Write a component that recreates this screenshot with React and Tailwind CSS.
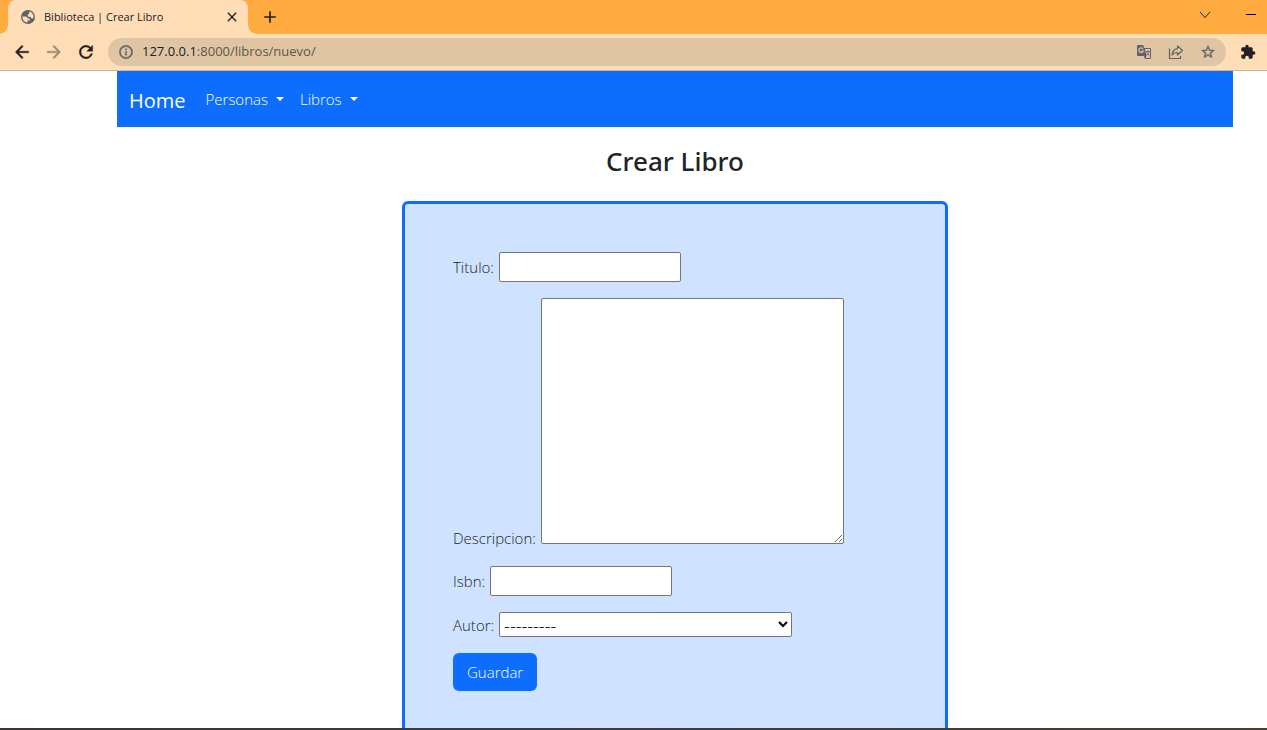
import React from 'react';
import { MdArrowBack, MdArrowForward, MdRefresh, MdInfoOutline, MdStarBorder, MdExtension, MdClose, MdAdd } from 'react-icons/md';

function GlobeIcon() {
  return (
    <svg width="16" height="16" viewBox="0 0 16 16" aria-hidden="true">
      <circle cx="8" cy="8" r="7" fill="#5f6368" />
      <path d="M2.300 7.600h2.800c1.500 0 2.500.800 2.500 2h1.200c.600 0 1 .500 1 1v.900H7.500v2.100A5.700 5.700 0 0 1 2.300 7.600z" fill="#ffdeb7" />
      <path d="M9.300 2.400a5.700 5.700 0 0 1 4.300 6.400c-.500.400-1 .600-1.600.600-.900 0-1.400-.700-1.400-1.600H7.800V6.200c0-.800.500-1.200 1.300-1.200V3.700z" fill="#ffdeb7" />
    </svg>
  );
}

function TranslateIcon() {
  return (
    <svg width="16" height="16" viewBox="0 0 16 16" aria-hidden="true">
      <path d="M2 1h5l1.500 3H14a1 1 0 0 1 1 1v9a1 1 0 0 1-1 1H9l-1.300-3H2a1 1 0 0 1-1-1V2a1 1 0 0 1 1-1z" fill="#5f6368" />
      <path d="M8.900 5H14v9H9.600l1-2z" fill="#dfc5a3" />
      <path d="M7 4.800A2.300 2.300 0 1 0 7.300 7H5.300" fill="none" stroke="#dfc5a3" strokeWidth="1.200" />
      <path d="M9.800 7.500h4M11.800 6.500v1M13 7.500c-.300 1.700-1.200 2.800-2.500 3.700M10.700 8.500c.500 1.200 1.500 2.200 2.700 3" fill="none" stroke="#5f6368" strokeWidth="0.900" />
    </svg>
  );
}

function ShareIcon() {
  return (
    <svg width="16" height="16" viewBox="0 0 16 16" fill="none" stroke="#5f6368" strokeWidth="1.200" aria-hidden="true">
      <path d="M1.500 4.500v10h11V12" />
      <path d="M9.500 2l5 4.500-5 4.500V8.500c-2.500 0-4.300.700-5.500 2.500.300-3.500 2.300-6 5.500-6.400z" strokeLinejoin="round" />
    </svg>
  );
}

function NavMenu({ children }) {
  return (
    <button type="button" className="flex items-center gap-2 px-2 py-2">
      {children}
      <span className="border-x-4 border-t-4 border-x-transparent border-t-white" />
    </button>
  );
}

function Browser() {
  const bold = '[&>path:last-child]:stroke-current [&>path:last-child]:stroke-[0.5]';
  return (
    <header className="shrink-0 bg-[#ffab40] text-[#202124]">
      <div className="flex h-[34px] items-center pl-2">
        <div className="relative flex h-full w-60 items-center rounded-t-lg bg-[#ffdeb7] pr-2 pl-3">
          <span className="absolute bottom-0 -left-2 size-2 bg-[radial-gradient(circle_at_top_left,transparent_7px,#ffdeb7_8px)]" />
          <span className="absolute -right-2 bottom-0 size-2 bg-[radial-gradient(circle_at_top_right,transparent_7px,#ffdeb7_8px)]" />
          <GlobeIcon />
          <span className="ml-2 flex-1 text-[11px]">Biblioteca | Crear Libro</span>
          <button type="button" aria-label="Cerrar"><MdClose className="size-4" /></button>
        </div>
        <button type="button" aria-label="Nueva" className="ml-3"><MdAdd className="size-5" /></button>
        <div className="ml-auto flex items-center gap-[34px] pb-1">
          <button type="button" aria-label="Buscar">
            <svg width="12" height="12" viewBox="0 0 12 12" fill="none" stroke="currentColor"><path d="M1 3l5 5.500L11 3" /></svg>
          </button>
          <button type="button" aria-label="Minimizar">
            <svg width="22" height="10" viewBox="0 0 22 10"><path d="M1 4.500h10" stroke="black" /></svg>
          </button>
        </div>
      </div>
      <div className="flex h-[37px] items-center border-b border-[#d1b593] bg-[#ffdeb7] pr-[11px] pl-3">
        <button type="button" aria-label="Atrás"><MdArrowBack strokeWidth="0" className={`size-5 ${bold}`} /></button>
        <button type="button" aria-label="Adelante" className="ml-3 text-[#9e8a74]"><MdArrowForward className={`size-5 ${bold}`} /></button>
        <button type="button" aria-label="Recargar" className="ml-3"><MdRefresh className={`size-5 ${bold}`} /></button>
        <div className="ml-3 flex h-7 flex-1 items-center rounded-full bg-[#dfc5a3] px-2.5">
          <MdInfoOutline className={`size-4 text-[#5f6368] ${bold}`} />
          <div className="ml-2 flex-1 text-[13px]">127.0.0.1<span className="text-[#5f5548]">:8000/libros/nuevo/</span></div>
          <div className="flex items-center gap-4 text-[#5f6368]">
            <button type="button" aria-label="Traducir"><TranslateIcon /></button>
            <button type="button" aria-label="Compartir"><ShareIcon /></button>
            <button type="button" aria-label="Favorito"><MdStarBorder className={`size-4 ${bold}`} /></button>
          </div>
        </div>
        <button type="button" aria-label="Extensiones" className="ml-3.5"><MdExtension className="size-4" /></button>
      </div>
    </header>
  );
}

export default function App() {
  const field = 'rounded-xs border border-[#767676] bg-white text-black';
  return (
    <div className="flex h-screen flex-col overflow-hidden bg-white font-['Open_Sans','Noto_Sans',sans-serif]">
      <Browser />
      <main className="min-h-0 flex-1 overflow-hidden pr-[34px] pl-[117px] text-[15px] leading-6 font-light text-[#212529]">
        <nav className="flex h-14 items-center bg-[#0d6efd] px-3 text-white">
          <a href="#" className="mr-3 pt-1 text-xl font-normal">Home</a>
          <NavMenu>Personas</NavMenu>
          <NavMenu>Libros</NavMenu>
        </nav>
        <h1 className="mt-4 text-center font-['Noto_Sans',sans-serif] text-[26px] leading-9 font-medium">Crear Libro</h1>
        <form className="mx-auto mt-[22px] h-[600px] w-[546px] rounded-md border-3 border-[#0d6efd] bg-[#cfe2ff] p-12">
          <div className="flex items-center gap-[5px]">
            <label htmlFor="titulo">Titulo:</label>
            <input id="titulo" type="text" className={`h-[30px] w-[182px] px-1 ${field}`} />
          </div>
          <div className="mt-4 flex items-end gap-[5px]">
            <label htmlFor="descripcion" className="-mb-1.5">Descripcion:</label>
            <textarea id="descripcion" className={`h-[246px] w-[303px] resize px-1 ${field}`} />
          </div>
          <div className="mt-[22px] flex items-center gap-[5px]">
            <label htmlFor="isbn">Isbn:</label>
            <input id="isbn" type="text" className={`h-[30px] w-[182px] px-1 ${field}`} />
          </div>
          <div className="mt-4 flex items-center gap-[5px]">
            <label htmlFor="autor">Autor:</label>
            <select id="autor" className={`h-[25px] w-[293px] px-0 text-lg leading-5 ${field}`}>
              <option>---------</option>
            </select>
          </div>
          <button type="button" className="mt-4 h-[38px] rounded-md bg-[#0d6efd] px-3.5 text-white">Guardar</button>
        </form>
      </main>
      <div className="h-0.5 shrink-0 bg-linear-to-r from-[#393536] via-[#3b3c3f] to-[#49402f]" />
    </div>
  );
}
